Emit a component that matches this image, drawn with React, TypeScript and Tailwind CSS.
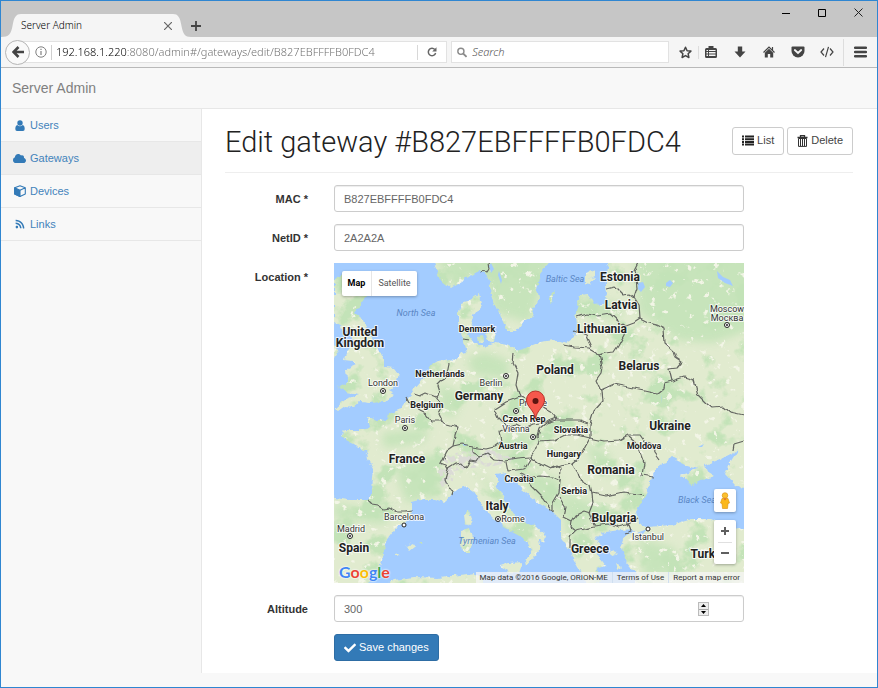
import React from "react";
import { FaCloud, FaRss, FaCheck } from "react-icons/fa";

const LAND = [
  "M0 18L14 8L30 10L26 22L32 34L20 50L30 58L34 70L42 82L50 96L50 104L60 105L65 111L62 121L55 127L62 131L50 139L36 140L27 139L20 144L11 143L4 148L1 146L12 136L26 131L12 129L3 124L14 118L13 106L22 102L18 98L10 97L13 88L22 82L14 68L0 60Z",
  "M-5 82L2 84L4 92L-5 98Z",
  "M-5 234L14 237L34 237L38 226L40 206L34 195L33 190L20 181L12 177L7 172L12 167L30 167L36 164L33 153L38 153L42 158L54 157L55 151L67 146L76 134L79 128L86 120L97 102L104 98L115 96L123 97L128 90L133 89L130 79L128 74L124 60L124 50L128 40L138 36L145 31L147 42L140 52L137 64L134 72L140 80L150 84L162 80L173 82L187 87L206 79L220 77L231 81L241 74L243 66L242 49L246 32L254 31L260 42L269 41L273 32L271 12L276 -5L415 -5L415 228L401 222L391 211L397 198L404 187L387 196L371 202L373 208L381 213L368 217L357 223L346 211L364 206L351 202L337 195L324 204L319 214L311 232L302 249L304 259L314 264L337 262L357 256L377 256L401 267L415 264L415 325L300 325L302 311L292 299L287 286L291 274L301 267L287 268L272 270L262 274L266 283L260 286L266 295L272 303L262 306L266 318L254 325L247 309L241 299L234 284L227 274L227 257L219 249L206 241L187 226L180 213L174 217L172 209L163 211L163 222L170 236L182 254L200 262L212 273L210 279L204 276L206 287L200 294L193 303L192 298L197 287L190 276L177 269L160 256L148 244L143 231L133 224L123 227L110 239L100 236L90 236L78 239L78 249L72 259L62 264L50 280L51 289L44 305L32 325L-5 325Z",
  "M98 -5L106 16L117 25L128 18L143 9L152 10L155 19L160 39L167 54L173 68L183 68L190 58L197 54L205 35L203 25L207 10L220 -5Z",
  "M152 68L160 64L163 72L159 80L153 77Z",
  "M143 73L149 72L150 79L144 80Z",
  "M216 39L216 33L221 28L219 36Z",
  "M252 10L260 7L260 13L252 17Z",
  "M251 16L261 14L256 21L251 20Z",
  "M130 253L135 247L137 256L134 262L131 260Z",
  "M126 268L136 265L139 276L136 289L128 289Z",
  "M165 303L175 300L189 299L185 310L176 309Z",
  "M72 283L78 280L81 284L76 288Z M85 279L89 279L88 281Z M61 291L65 290L64 293Z",
  "M45 325L60 317L80 314L105 315L140 310L150 315L150 325Z",
  "M275 288l7-2l2 5l-6 2Z M282 301l5 3l-3 3Z M268 309l5 4l-2 3Z M204 269l8 5l-5 3Z",
].join(" ");

const LAKES = "M383 8l6 6l7 3l3 6l-8-3l-7-5Z M332 20l4-3l3 3l-3 4l-4-1Z M304 20l5-1l2 5l-4 5l-3-3Z M157 0l3 6l-3 4l-2-7Z M165 8l3 9l-1 4l-3-9Z M327 131l1 10l-1-6Z M339 157l6 3l-3 0Z M313 266l-10 4l6 1Z M218 186l-7 4l4-1Z M128 180l6 2l-4 1Z M364 184l6-3l-2 3Z";

const BORDERS = [
  "34 237,38 241,44 242,50 246,56 245,64 249,72 249,78 248",
  "73 134,76 140,82 142,86 148,92 151,97 158,107 158,113 161,124 164,121 173,119 183,112 188,106 200,112 202,114 206,111 216,115 225,120 228,119 232",
  "114 206,122 201,128 200,132 205,136 198,142 199,146 193",
  "119 183,128 181,138 183,138 189,146 193",
  "146 193,153 190,160 196,172 197,184 195,196 194",
  "138 184,152 186,160 184,168 178,166 168,174 165,180 161",
  "186 134,172 139,161 146,165 155,173 163,182 161,190 165,198 161,206 160,212 159,222 155",
  "80 131,86 133,92 130,102 134,106 128,104 122,110 116,113 110,115 100",
  "102 134,108 143,104 150,108 158",
  "128 76,136 77",
  "180 91,179 100,184 110,182 122,186 134,196 137,204 141,211 146,218 150,222 157,235 157,246 157,254 160",
  "229 82,240 84,256 85,263 89,265 92,268 104,267 110,262 117,267 128,268 139,260 148,256 161,256 175",
  "272 26,280 24,288 32,296 31,300 34",
  "304 0,300 8,302 15,303 25,300 34,305 42,306 56",
  "242 54,252 51,264 53,276 51,284 58,292 63,300 60,306 56,314 60,322 62,330 66,331 80,340 88,342 95,348 99,343 105,335 106,338 118",
  "292 63,290 72,284 83,280 89,270 90,265 92",
  "240 68,252 73,257 84",
  "267 127,280 121,295 124,310 127,324 130,329 126,330 120,338 118,350 114,360 117,364 132,372 140,378 145,390 144,396 149,410 152",
  "399 187,400 181,410 178",
  "256 175,270 178,285 177,294 172,306 172,311 179,318 182,320 190,325 197",
  "294 173,303 181,305 187,310 200,308 212,320 214",
  "256 175,250 186,244 196,238 201,226 203,216 206,204 200,196 194,202 186,205 179,220 178,232 172,244 172,256 175",
  "222 157,212 160,206 165,204 172,205 179",
  "238 201,244 210,246 217,256 222,258 230,272 233,290 229,311 232",
  "258 230,259 240,255 250,260 262,275 260,284 264,292 262,305 254",
  "172 198,174 208,182 207,190 206,196 196",
  "187 210,196 214,206 213,218 214,226 218,225 230,219 240,219 248",
  "189 212,198 224,210 236,219 249",
  "225 234,232 245,230 254,238 258,237 264,242 268,260 264",
  "238 258,242 252,250 248,256 250",
  "242 268,236 274,236 284",
  "216 206,222 203,227 206,226 218",
  "292 258,296 268,290 270",
  "145 9,149 7,154 10,156 7,155 0",
];

type Label = [string, number, number, number];
const COUNTRIES: Label[] = [
  ["Denmark", 143, 69, 9], ["Netherlands", 106, 114, 9],
  ["Germany", 145, 137, 12], ["Belgium", 93, 145, 9], ["France", 73, 200, 12], ["Spain", 20, 289, 12],
  ["Italy", 163, 247, 12], ["Austria", 179, 186, 9], ["Croatia", 185, 219, 9], ["Czech Rep", 190, 159, 9],
  ["Poland", 221, 111, 12], ["Estonia", 286, 18, 12], ["Latvia", 287, 46, 12], ["Lithuania", 268, 70, 12],
  ["Belarus", 305, 107, 12], ["Ukraine", 336, 167, 12], ["Slovakia", 237, 170, 9], ["Moldova", 310, 186, 9],
  ["Hungary", 230, 194, 9], ["Romania", 277, 211, 12], ["Serbia", 240, 231, 9], ["Bulgaria", 280, 259, 12],
  ["Greece", 256, 290, 12], ["Turkey", 375, 295, 12],
];
const CITIES: Label[] = [
  ["London", 49, 123, 9], ["Berlin", 157, 123, 9], ["Paris", 71, 160, 9], ["Prague", 199, 143, 9],
  ["Vienna", 182, 169, 9], ["Barcelona", 70, 257, 9], ["Madrid", 17, 269, 9], ["Rome", 179, 259, 9],
  ["Istanbul", 314, 277, 9], ["Moscow", 393, 49, 9], ["Москва", 393, 58, 9],
];
const SEAS: Label[] = [
  ["North Sea", 82, 53, 9], ["Baltic Sea", 231, 19, 9], ["Tyrrhenian Sea", 153, 281, 9], ["Black Sea", 363, 240, 9],
];
const CAPITALS = [[49, 128], [172, 113], [71, 165], [182, 148], [199, 174], [16, 273], [164, 256], [393, 62]];
const TOWNS = [[70, 262], [314, 266]];

function MapDrawing() {
  return (
    <svg className="block h-full w-full" viewBox="0 0 410 320" preserveAspectRatio="xMidYMid slice" fontFamily="Roboto, 'Liberation Sans', sans-serif" textAnchor="middle">
      <defs>
        <filter id="coast" x="0" y="0" width="100%" height="100%" filterUnits="userSpaceOnUse">
          <feTurbulence type="fractalNoise" baseFrequency="0.14" numOctaves="3" seed="4" result="n" />
          <feDisplacementMap in="SourceGraphic" in2="n" scale="6" xChannelSelector="R" yChannelSelector="G" />
        </filter>
        <filter id="wobble" x="0" y="0" width="100%" height="100%" filterUnits="userSpaceOnUse">
          <feTurbulence type="fractalNoise" baseFrequency="0.12" numOctaves="1" seed="4" result="n" />
          <feDisplacementMap in="SourceGraphic" in2="n" scale="6" xChannelSelector="R" yChannelSelector="G" />
        </filter>
        <filter id="wood" x="0" y="0" width="410" height="320" filterUnits="userSpaceOnUse" colorInterpolationFilters="sRGB">
          <feTurbulence type="fractalNoise" baseFrequency="0.035" numOctaves="5" seed="11" />
          <feColorMatrix values="0 0 0 0 0.765  0 0 0 0 0.89  0 0 0 0 0.72  7 0 0 0 -3.7" />
        </filter>
        <filter id="field" x="0" y="0" width="410" height="320" filterUnits="userSpaceOnUse" colorInterpolationFilters="sRGB">
          <feTurbulence type="fractalNoise" baseFrequency="0.13" numOctaves="4" seed="23" />
          <feColorMatrix values="0 0 0 0 0.95  0 0 0 0 0.96  0 0 0 0 0.9  0 10 0 0 -6.6" />
        </filter>
        <filter id="rock" x="0" y="0" width="410" height="320" filterUnits="userSpaceOnUse" colorInterpolationFilters="sRGB">
          <feTurbulence type="fractalNoise" baseFrequency="0.16" numOctaves="3" seed="8" />
          <feColorMatrix values="0 0 0 0 0.86  0 0 0 0 0.86  0 0 0 0 0.84  0 0 10 0 -4.6" />
        </filter>
        <filter id="soft" x="-20%" y="-20%" width="140%" height="140%"><feGaussianBlur stdDeviation="4" /></filter>
        <clipPath id="alps"><path d="M103 213L108 195L118 190L135 188L150 186L172 190L182 197L160 203L138 205L120 208L118 226L108 224Z" /></clipPath>
        <mask id="land" maskUnits="userSpaceOnUse" x="0" y="0" width="410" height="320"><path d={LAND} fill="#fff" filter="url(#coast)" /></mask>
      </defs>
      <rect width="410" height="320" fill="#a3ccff" />
      <g mask="url(#land)">
        <rect width="410" height="320" fill="#e1ebcf" />
        <g fill="#c3e3b8" opacity="0.85" filter="url(#soft)">
          <path d="M300 -10H420V66L380 80L345 78L320 60L304 50Z M98 -10H220L196 60L160 50L150 10L120 25Z M246 32L290 42L285 56L250 54Z" />
          <path d="M132 96L150 88L176 98L174 116L140 112Z M105 120L130 132L120 155L106 150Z M170 170L200 170L190 190L160 190Z M180 205L225 215L232 255L200 232Z M232 230L260 240L250 275L232 270Z M250 180L275 190L280 215L262 205Z" />
          <path d="M60 205L100 190L108 232L72 240Z M48 170L95 165L90 180L50 185Z M0 240L60 250L50 262L0 255Z M140 205L175 240L190 262L170 250Z M305 275L340 285L350 310L310 315Z" />
        </g>
        <rect width="410" height="320" filter="url(#wood)" />
        <rect width="410" height="320" filter="url(#field)" />
        <g clipPath="url(#alps)"><rect width="410" height="320" filter="url(#rock)" /></g>
        <path d={LAKES} fill="#a3ccff" />
      </g>
      <g fill="none" stroke="#646662" strokeWidth="1.2" strokeLinejoin="round" filter="url(#wobble)">
        {BORDERS.map((b) => <polyline key={b} points={b} />)}
      </g>
      <g fill="#fff" stroke="#222" strokeWidth="1">
        {CAPITALS.map(([x, y]) => (
          <g key={x}><circle cx={x} cy={y} r="2.5" /><circle cx={x} cy={y} r="1" fill="#222" stroke="none" /></g>
        ))}
        {TOWNS.map(([x, y]) => <circle key={x} cx={x} cy={y} r="2" />)}
      </g>
      <g fill="#5a86c4" fontStyle="italic">
        {SEAS.map(([t, x, y, s]) => <text key={t} x={x} y={y} fontSize={s}>{t}</text>)}
      </g>
      <g fill="#333" stroke="#fff" strokeOpacity="0.75" strokeWidth="2" paintOrder="stroke" strokeLinejoin="round">
        {CITIES.map(([t, x, y, s]) => <text key={t} x={x} y={y} fontSize={s}>{t}</text>)}
      </g>
      <g fill="#222" stroke="#fff" strokeOpacity="0.75" strokeWidth="2" paintOrder="stroke" strokeLinejoin="round" fontWeight="700">
        <text fontSize="12"><tspan x="26" y="73">United</tspan><tspan x="26" y="84">Kingdom</tspan></text>
        {COUNTRIES.map(([t, x, y, s]) => <text key={t} x={x} y={y} fontSize={s}>{t}</text>)}
      </g>
      <path d="M201.500 156C200.500 147 192.500 144 192.500 137A9 9 0 0 1 210.500 137C210.500 144 202.500 147 201.500 156Z" fill="#f6584c" stroke="#b8312a" strokeWidth="1" />
      <circle cx="201.500" cy="138" r="3" fill="#5c1410" />
    </svg>
  );
}

function GoogleLogo() {
  return (
    <div className="absolute bottom-px left-[5px] font-['Lato','Open_Sans',sans-serif] text-[16px] leading-5 font-bold [text-shadow:0_0_2px_#fff,0_0_2px_#fff]">
      <span className="text-[#4285f4]">G</span><span className="text-[#ea4335]">o</span><span className="text-[#fbbc05]">o</span><span className="text-[#4285f4]">g</span><span className="text-[#34a853]">l</span><span className="text-[#ea4335]">e</span>
    </div>
  );
}

function LocationMap() {
  return (
    <div className="relative h-80 overflow-hidden font-['Roboto','Liberation_Sans',sans-serif] font-normal">
      <MapDrawing />
      <div className="absolute top-2 left-2 flex h-[25px] rounded-xs bg-white text-[9px] text-[#565656] shadow-[0_1px_3px_rgba(0,0,0,0.3)]">
        <button type="button" className="w-[30px] border-r border-[#e6e6e6] font-bold text-black">Map</button>
        <button type="button" className="w-[45px]">Satellite</button>
      </div>
      <button type="button" aria-label="Street View" className="absolute right-2 bottom-[71px] flex h-[23px] w-[22px] items-center justify-center rounded-xs bg-white shadow-[0_1px_3px_rgba(0,0,0,0.3)]">
        <svg width="10" height="17" viewBox="0 0 10 17">
          <path d="M2 6.500H8L9.500 11L8 11.500L7.500 16.500H2.500L2 11.500L0.500 11Z" fill="#fbb81b" stroke="#d98d0d" strokeWidth=".6" />
          <circle cx="5" cy="3.500" r="2.800" fill="#fbc02d" stroke="#d98d0d" strokeWidth=".6" />
          <path d="M3.500 6.500H6.500L5 8.500Z" fill="#e8642c" />
        </svg>
      </button>
      <div className="absolute right-2 bottom-[19px] flex h-11 w-[22px] flex-col rounded-xs bg-white shadow-[0_1px_3px_rgba(0,0,0,0.3)]">
        <button type="button" aria-label="Zoom in" className="flex flex-1 items-center justify-center">
          <svg width="8" height="8" viewBox="0 0 8 8"><path d="M0 4H8M4 0V8" stroke="#5f5f5f" strokeWidth="2" /></svg>
        </button>
        <div className="mx-1 h-px bg-[#e0e0e0]" />
        <button type="button" aria-label="Zoom out" className="flex flex-1 items-center justify-center">
          <svg width="8" height="8" viewBox="0 0 8 8"><path d="M0 4H8" stroke="#5f5f5f" strokeWidth="2" /></svg>
        </button>
      </div>
      <GoogleLogo />
      <div className="absolute right-0 bottom-0 flex h-[11px] items-center bg-[#f5f5f5]/75 text-[8px] leading-[11px] text-[#333]">
        <span className="px-1">Map data ©2016 Google, ORION-ME</span>
        <a href="#terms" className="border-l border-[#cfdff0] px-1">Terms of Use</a>
        <a href="#report" className="border-l border-[#cfdff0] px-1">Report a map error</a>
      </div>
    </div>
  );
}

function BrowserChrome() {
  return (
    <header className="font-['Noto_Sans','Open_Sans',sans-serif]">
      <div className="flex h-9 items-end bg-[#c6c6c6]">
        <svg width="20" height="23" viewBox="0 0 20 23"><path d="M0 23C8 23 10 20 11.500 12C13 3 15 0 20 0V23Z" fill="#f5f5f5" /></svg>
        <div className="flex h-[23px] w-[152px] items-center justify-between bg-[#f5f5f5] pr-px text-[10px] text-black">
          <span className="font-light">Server Admin</span>
          <button type="button" aria-label="Close tab"><svg width="8" height="8" viewBox="0 0 8 8"><path d="M0 0L8 8M8 0L0 8" stroke="#666" strokeWidth="1.200" /></svg></button>
        </div>
        <svg width="18" height="23" viewBox="0 0 18 23"><path d="M18 23C12 23 10 20 8.500 12C7 3 5 0 0 0V23Z" fill="#f5f5f5" /></svg>
        <button type="button" aria-label="New tab" className="mb-1.5 flex h-[10px] w-[10px]"><svg width="10" height="10" viewBox="0 0 10 10"><path d="M0 5H10M5 0V10" stroke="#444" strokeWidth="1.800" /></svg></button>
        <div className="flex flex-1 items-center justify-end gap-7 self-start pt-[7px] pr-[14px]">
          <button type="button" aria-label="Minimize"><svg width="8" height="8" viewBox="0 0 8 8"><path d="M0 4.500H8" stroke="#000" /></svg></button>
          <button type="button" aria-label="Maximize"><svg width="8" height="8" viewBox="0 0 8 8"><path d="M.5 .5H7.500V7.500H.5Z" fill="none" stroke="#000" /></svg></button>
          <button type="button" aria-label="Close"><svg width="9" height="9" viewBox="0 0 9 9"><path d="M.5 .5L8.500 8.500M8.500 .5L.5 8.500" stroke="#222" /></svg></button>
        </div>
      </div>
      <div className="flex h-[31px] items-center border-b border-[#b9b9b9] bg-[#f5f5f5] pl-1">
        <button type="button" aria-label="Back" className="z-10 -mr-3 flex h-[25px] w-[25px] items-center justify-center rounded-full border border-[#b5b5b5] bg-[#f9f9f9]">
          <svg width="12" height="12" viewBox="0 0 12 12"><path d="M6.500 1L1.500 6L6.500 11M2 6H12" fill="none" stroke="#444" strokeWidth="2.600" /></svg>
        </button>
        <div className="flex h-[22px] w-[429px] items-center border border-[#e2e2e2] bg-white pl-4">
          <svg width="12" height="12" viewBox="0 0 12 12" fill="none" stroke="#808080"><circle cx="6" cy="6" r="5.200" /><path d="M6 5V9M6 2.700V4" strokeWidth="1.200" /></svg>
          <div className="mx-1 h-[15px] w-px bg-[#d0d0d0]" />
          <input aria-label="Address" defaultValue="192.168.1.220:8080/admin#/gateways/edit/B827EBFFFFB0FDC4" className="min-w-0 flex-1 bg-[linear-gradient(90deg,#000_71px,#6a6a6a_71px)] bg-clip-text text-[11px] font-light text-transparent outline-none" />
          <div className="h-[15px] w-px bg-[#d8d8d8]" />
          <button type="button" aria-label="Reload" className="flex w-7 justify-center"><svg width="10" height="10" viewBox="0 0 10 10"><path d="M7.800 2.600A3.700 3.700 0 1 0 8.600 6" fill="none" stroke="#666" strokeWidth="1.500" /><path d="M9.500 .2V4.500H5.200Z" fill="#666" /></svg></button>
        </div>
        <label className="ml-1 flex h-[22px] min-w-0 flex-1 items-center border border-[#e2e2e2] bg-white pl-[5px]">
          <svg width="11" height="11" viewBox="0 0 11 11" fill="none" stroke="#8a8a8a"><circle cx="4.200" cy="4.200" r="3.300" strokeWidth="1.500" /><path d="M6.700 6.700L10.300 10.300" strokeWidth="2" /></svg>
          <input type="text" aria-label="Search" placeholder="Search" className="ml-[5px] w-full min-w-0 text-[11px] font-light italic outline-none placeholder:text-[#555]" />
        </label>
        <nav aria-label="Browser tools" className="flex h-full items-center pl-[10px] text-[#444]">
          <button type="button" aria-label="Bookmark"><svg width="13" height="13" viewBox="0 0 13 13"><path d="M6.500 1.200L8.100 4.700L11.900 5.100L9.100 7.700L9.900 11.500L6.500 9.600L3.100 11.500L3.900 7.700L1.100 5.100L4.900 4.700Z" fill="none" stroke="currentColor" strokeWidth="1.500" strokeLinejoin="round" /></svg></button>
          <div className="mx-[6px] h-[13px] w-px bg-[#ddd]" />
          <button type="button" aria-label="Library"><svg width="12" height="12" viewBox="0 0 12 12"><path d="M1.500 2H3.500V0H8.500V2H10.500Q12 2 12 3.500V10.500Q12 12 10.500 12H1.500Q0 12 0 10.500V3.500Q0 2 1.500 2Z" fill="currentColor" /><path d="M1.500 4H3V5H1.500ZM4 4H10.500V5H4ZM1.500 6H3V7.500H1.500ZM4 6H10.500V7.500H4ZM1.500 8.500H3V10H1.500ZM4 8.500H10.500V10H4Z" fill="#f5f5f5" /></svg></button>
          <button type="button" aria-label="Downloads" className="ml-[17px]"><svg width="12" height="12" viewBox="0 0 12 12"><path d="M3.800 .5H8.200V5.500H11.500L6 11.500L.5 5.500H3.800Z" fill="currentColor" /></svg></button>
          <button type="button" aria-label="Home" className="ml-[17px]"><svg width="12" height="12" viewBox="0 0 12 12" fill="currentColor"><path d="M6 2.800L10.200 6.800V11.500H7.200V8H4.800V11.500H1.800V6.800Z" /><path d="M.5 6.500L6 1L11.500 6.500M9.500 1V4" fill="none" stroke="currentColor" strokeWidth="1.200" /></svg></button>
          <button type="button" aria-label="Pocket" className="ml-4"><svg width="14" height="12" viewBox="0 0 14 12"><path d="M1.500 .5H12.500Q13.500 .5 13.500 1.500V5A6.500 6.500 0 0 1 .5 5V1.500Q.5 .5 1.500 .5Z" fill="currentColor" /><path d="M3.800 4L7 7L10.200 4" fill="none" stroke="#f5f5f5" strokeWidth="1.800" strokeLinecap="round" /></svg></button>
          <button type="button" aria-label="Developer" className="ml-[15px]"><svg width="14" height="12" viewBox="0 0 14 12"><path d="M4 2.500L1 6L4 9.500M10 2.500L13 6L10 9.500M8.500 .8L5.500 11.200" fill="none" stroke="currentColor" strokeWidth="1.200" /></svg></button>
          <div className="mr-[10px] ml-[9px] h-[27px] w-px bg-[#ddd]" />
          <button type="button" aria-label="Menu" className="mr-[10px]"><svg width="13" height="12" viewBox="0 0 13 12"><path d="M1 1.700H12M1 6H12M1 10.300H12" stroke="currentColor" strokeWidth="2.400" strokeLinecap="round" /></svg></button>
        </nav>
      </div>
    </header>
  );
}

function CubeIcon() {
  return (
    <svg width="12" height="12" viewBox="0 0 12 12" fill="none" stroke="currentColor" strokeWidth="1.100" strokeLinejoin="round">
      <path d="M6 .7L11.300 2.800V9L6 11.400L.7 9V2.800Z M6 5.200L11.300 2.800" />
      <path d="M.7 2.800L6 5.200V11.400L.7 9Z" fill="currentColor" />
    </svg>
  );
}

function UserIcon() {
  return (
    <svg width="10" height="11" viewBox="0 0 10 11" fill="currentColor">
      <circle cx="5" cy="3" r="2.700" />
      <path d="M2.300 5Q5 7.500 7.700 5Q9.700 5.500 9.700 9Q9.700 11 8 11H2Q.3 11 .3 9Q.3 5.500 2.300 5Z" />
    </svg>
  );
}

const NAV = [
  { label: "Users", icon: <UserIcon /> },
  { label: "Gateways", icon: <FaCloud size={13} />, active: true },
  { label: "Devices", icon: <CubeIcon /> },
  { label: "Links", icon: <FaRss size={10} /> },
];

const FIELD = "block h-[27px] w-full rounded-[3px] border border-[#ccc] bg-white px-[9px] text-[11px] text-[#666] shadow-[inset_0_1px_1px_rgba(0,0,0,0.075)] outline-none";
const SMALL_BUTTON = "flex h-7 items-center gap-[3px] rounded-[3px] border border-[#ccc] bg-white px-[9px] text-[11px] text-[#444]";

function Row({ id, label, children }: { id?: string; label?: string; children: React.ReactNode }) {
  return (
    <div className="-mx-[13px] mb-3 grid grid-cols-12">
      <div className="col-span-2 px-[13px] pt-[5px] text-right text-[11px] leading-[18px] font-bold text-[#333]">
        {label && <label htmlFor={id}>{label}</label>}
      </div>
      <div className="col-span-8 px-[13px]">{children}</div>
    </div>
  );
}

export default function App() {
  return (
    <div className="flex min-h-screen flex-col border border-[#2f86d1] bg-[#f8f8f8] font-['Liberation_Sans',Arial,sans-serif]">
      <BrowserChrome />
      <div className="flex h-[41px] items-center border-b border-[#e7e7e7] pl-[11px] text-[14px] text-[#808080]">
        <a href="#home">Server Admin</a>
      </div>
      <div className="flex flex-1">
        <nav className="w-[200px] shrink-0">
          {NAV.map((n) => (
            <a key={n.label} href={"#" + n.label.toLowerCase()} className={"flex h-[33px] items-center gap-1 border-b border-[#e7e7e7] pl-3 text-[11px] text-[#4383bb] " + (n.active ? "bg-[#eee]" : "")}>
              <span className="flex w-[13px] justify-center text-[#337ab7]">{n.icon}</span>
              {n.label}
            </a>
          ))}
        </nav>
        <main className="mb-3.5 flex-1 border-l border-[#e7e7e7] bg-white pr-6 pl-[23px]">
          <div className="mb-3 flex h-16 items-center justify-between border-b border-[#eee]">
            <h1 className="pt-1 font-['Roboto','Liberation_Sans',sans-serif] text-[29px] font-light text-[#222]">Edit gateway #B827EBFFFFB0FDC4</h1>
            <div className="flex gap-[3px]">
              <button type="button" className={SMALL_BUTTON}>
                <svg width="12" height="11" viewBox="0 0 12 11" stroke="#222" strokeWidth="2"><path d="M0 1.500H2M3 1.500H12M0 4.200H2M3 4.200H12M0 6.900H2M3 6.900H12M0 9.600H2M3 9.600H12" /></svg>
                List
              </button>
              <button type="button" className={SMALL_BUTTON}>
                <svg width="11" height="12" viewBox="0 0 11 12" fill="none" stroke="#333"><path d="M.5 2.500H10.500M3.500 2V.6H7.500V2" strokeWidth="1.300" /><path d="M1.500 3.500H9.500V11.400H1.500ZM3.500 4V11M5.500 4V11M7.500 4V11" /></svg>
                Delete
              </button>
            </div>
          </div>
          <form>
            <Row id="mac" label="MAC *"><input id="mac" type="text" defaultValue="B827EBFFFFB0FDC4" className={FIELD} /></Row>
            <Row id="netid" label="NetID *"><input id="netid" type="text" defaultValue="2A2A2A" className={FIELD} /></Row>
            <Row label="Location *"><LocationMap /></Row>
            <Row id="altitude" label="Altitude">
              <div className="relative">
                <input id="altitude" type="number" defaultValue="300" className={FIELD + " [appearance:textfield] [&::-webkit-inner-spin-button]:appearance-none"} />
                <div className="absolute top-[7px] right-[35px] flex h-[14px] w-[11px] flex-col border border-[#bbb] bg-[#eee]">
                  <button type="button" aria-label="Increase" className="flex flex-1 items-center justify-center border-b border-[#aaa]"><svg width="5" height="3" viewBox="0 0 5 3"><path d="M0 3L2.500 0L5 3Z" /></svg></button>
                  <button type="button" aria-label="Decrease" className="flex flex-1 items-center justify-center"><svg width="5" height="3" viewBox="0 0 5 3"><path d="M0 0L2.500 3L5 0Z" /></svg></button>
                </div>
              </div>
            </Row>
            <Row>
              <button type="button" className="flex h-[27px] items-center gap-[3px] rounded-[3px] border border-[#2e6da4] bg-[#337ab7] px-[9px] text-[11px] text-white"><FaCheck size={12} />Save changes</button>
            </Row>
          </form>
        </main>
      </div>
    </div>
  );
}
